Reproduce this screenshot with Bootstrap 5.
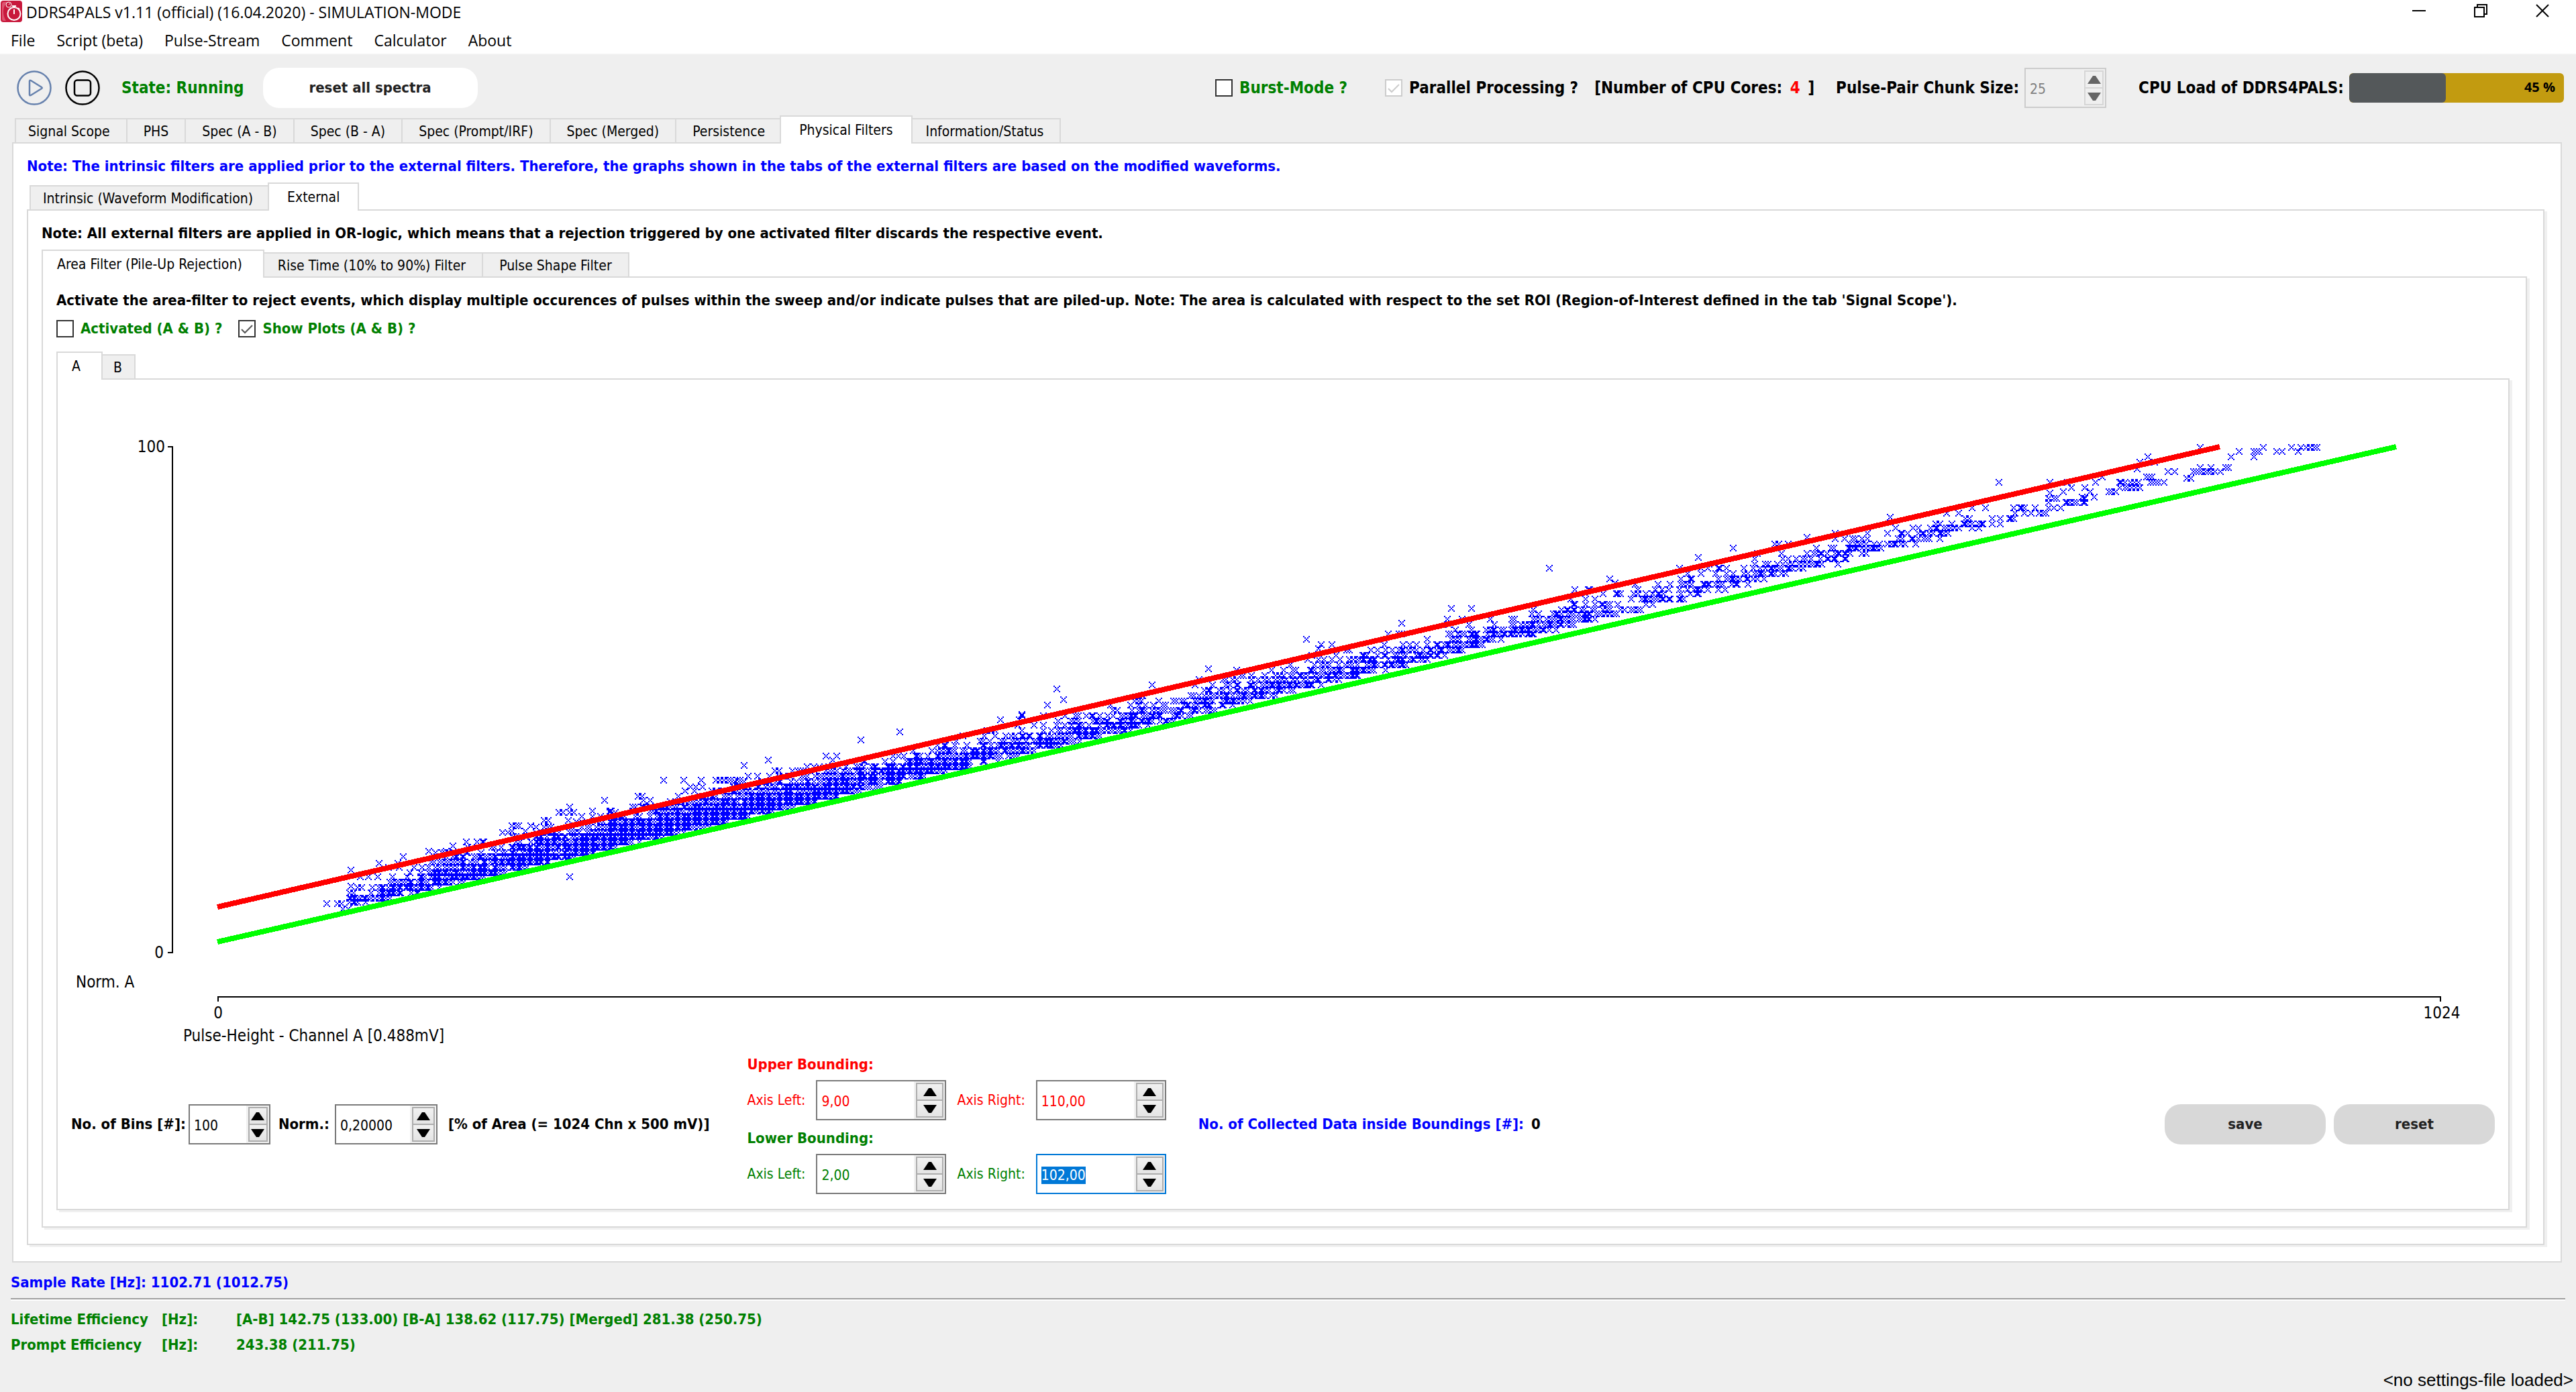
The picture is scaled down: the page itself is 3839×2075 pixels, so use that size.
<!DOCTYPE html>
<html lang="en">
<head>
<meta charset="utf-8">
<meta name="viewport" content="width=device-width, initial-scale=1">
<title>DDRS4PALS v1.11 (official) (16.04.2020) - SIMULATION-MODE</title>
<link href="https://cdn.jsdelivr.net/npm/bootstrap@5.3.0/dist/css/bootstrap.min.css" rel="stylesheet">
<style>
:root{--face:#efefef;--line:#d9d9d9;--tahoma:"DejaVu Sans Condensed","DejaVu Sans",sans-serif;--segoe:"Open Sans","Noto Sans",sans-serif}
body{background:var(--face);color:#000;font:21px/28px var(--tahoma)}
.titlebar{height:40px;font:23px/36px var(--segoe)}
.win-btn{width:92px;height:32px;padding:0;border:0;background:none;line-height:0}
.menubar{height:42px;border-bottom:2px solid #f2f2f2;font:23px/40px var(--segoe)}
.menubar a{color:#000;text-decoration:none}
.b22{font-size:22px;font-weight:700}
.b24{font-size:24px;font-weight:700}
.c-green{color:#008000}.c-blue{color:#00f}.c-red{color:#f00}
.toolrow{height:90px;padding:8px 18px 0 25px}
.round-btn{padding:0;border:0;background:none;line-height:0}
.state{margin:0 28px 0 4px}
.pill{border:0;border-radius:24px;height:60px;color:#222;font:bold 22px/28px var(--tahoma)}
.pill-white{width:320px;background:#fff}
.pill-grey{width:240px;background:#d8d8d8}
.tick{display:flex;align-items:center;gap:10px;margin:0;padding:0;min-height:0}
.tick .form-check-input{float:none;margin:0;width:26px;height:26px;border:2px solid #333;border-radius:0;background-color:#fff;box-shadow:none;flex:none}
.tick .form-check-input:checked{background-color:#fff;border-color:#333;background-size:22px 22px;background-image:url("data:image/svg+xml,%3Csvg xmlns='http://www.w3.org/2000/svg' viewBox='0 0 22 22'%3E%3Cpath d='M3 12l5 5L19 6' fill='none' stroke='%23555' stroke-width='2'/%3E%3C/svg%3E")}
.tick .form-check-input:disabled{opacity:1;border-color:#ccc;background-image:url("data:image/svg+xml,%3Csvg xmlns='http://www.w3.org/2000/svg' viewBox='0 0 22 22'%3E%3Cpath d='M3 12l5 5L19 6' fill='none' stroke='%23ccc' stroke-width='2'/%3E%3C/svg%3E")}
.tick .form-check-label{opacity:1!important}
.spin{display:flex;height:60px;border:2px solid #7a7a7a;background:#fff;flex:none}
.spin:focus-within{border-color:#0078d7}
.spin input{flex:1;min-width:0;width:0;border:0;outline:0;padding:4px 0 0 6px;background:none;color:inherit;font:21px/26px var(--tahoma)}
.spin input::selection{background:#0078d7;color:#fff}
.spin-keys{display:flex;flex-direction:column;width:46px;padding:2px 2px 2px 3px;background:#f0f0f0}
.spin-keys button{flex:1;display:flex;align-items:center;justify-content:center;padding:0;border:2px solid #adadad;background:linear-gradient(#f1f1f1,#e4e4e4)}
.spin-keys button+button{margin-top:-2px}
.spin-w122{width:122px}.spin-w122 .spin-keys{width:34px}
.spin-w153{width:153px}.spin-w153 .spin-keys{width:39px}
.spin-w194{width:194px}
.spin:has(:disabled){border-color:#ccc;background:var(--face);color:#808080}
.spin:has(:disabled) button{border-color:#d6d6d6;background:var(--face)}
.cpu{width:320px;height:44px;border-radius:6px;background:#c29b10;position:relative}
.cpu .progress-bar{background:#54585a;border-radius:6px}
.cpu span{position:absolute;right:13px;top:7px;font:bold 20px/28px var(--segoe)}
.tabs{padding-left:4px;align-items:flex-end;height:40px;border:0;flex-wrap:nowrap}
.tabs .nav-link{height:36px;padding:4px 24px 2px;border:2px solid var(--line);border-left-width:0;border-bottom:0;border-radius:0;background:var(--face);color:#000;line-height:28px;white-space:nowrap}
.tabs .nav-item:first-child .nav-link{border-left-width:2px;padding-left:18px}
.tabs .nav-link.active{position:relative;z-index:1;height:42px;margin:0 -4px -2px;padding:6px 27px 6px;border-left-width:2px;background:#fff;color:#000}
.tabs .nav-item:first-child .nav-link.active{padding-left:21px;padding-right:31px}
.tabs-short .nav-link{padding-left:20px;padding-right:18px}
.tabs-gap{margin-top:10px}
.pane{border:2px solid var(--line);background:#fff;padding:20px 24px 24px 20px}
.pane .pane{box-shadow:4px 3px 0 #f0f0f0}
.options{margin:14px 0 20px}
.plotpane{padding:0 20px 22px}
.plot{display:block;margin:0 -20px;width:calc(100% + 40px);height:auto;font:24px var(--tahoma)}
.frame{padding:0 21px 0 18px}
.bound-title{line-height:30px}
.rule{height:4px;margin:9px 0 14px;border-top:2px solid #a0a0a0;border-bottom:2px solid #fff}
.rates{display:grid;grid-template-columns:225px 111px auto;row-gap:10px;justify-content:start}
.status{font:26px/28px "Liberation Sans",Arial,sans-serif}
</style>
</head>
<body>
<header class="bg-white">
  <div class="titlebar d-flex align-items-start">
    <svg class="me-1 flex-shrink-0" width="35" height="34" viewBox="0 0 35 34"><rect x="1" y="1" width="32" height="32" rx="4" fill="#c8193c"/><path d="M3 20V6q0-3 3-3h5Q5 9 5 17t4 14H6q-3 0-3-3z" fill="#dd5570"/><g fill="none" stroke="#fff"><circle cx="21" cy="20.500" r="9.500" stroke-width="2"/><path d="M21 14v7M18 9h6M21 8v3M27 12l2 2" stroke-width="2"/><circle cx="13" cy="7" r="4" stroke-width="1"/><path d="M13 7l2-2" stroke-width="1"/></g></svg>
    <span class="flex-grow-1">DDRS4PALS v1.11 (official) (16.04.2020) - SIMULATION-MODE</span>
    <div class="d-flex pe-1">
      <button class="win-btn" aria-label="Minimize"><svg width="20" height="20"><path d="M0 10h20" stroke="#000" stroke-width="2"/></svg></button>
      <button class="win-btn" aria-label="Restore"><svg width="20" height="20" fill="none" stroke="#000" stroke-width="2"><path d="M1 5h14v14H1zM5 5V1h14v14h-4"/></svg></button>
      <button class="win-btn" aria-label="Close"><svg width="20" height="20" stroke="#000" stroke-width="2"><path d="M1 1l18 18M19 1L1 19"/></svg></button>
    </div>
  </div>
  <nav class="menubar d-flex">
    <a class="px-3" href="#">File</a><a class="px-3" href="#">Script (beta)</a><a class="px-3" href="#">Pulse-Stream</a><a class="px-3" href="#">Comment</a><a class="px-3" href="#">Calculator</a><a class="px-3" href="#">About</a>
  </nav>
</header>

<section class="toolrow d-flex align-items-center b24">
  <button class="round-btn" aria-label="Start"><svg width="52" height="52" viewBox="0 0 52 52" fill="none" stroke="#6681ad" stroke-width="2.500"><circle cx="26" cy="26" r="24.500"/><path d="M19 16v20q0 2 2 1l16-10q1.500-1 0-2L21 15q-2-1-2 1z"/></svg></button>
  <button class="round-btn ms-3 me-4" aria-label="Stop"><svg width="60" height="52" viewBox="-4 0 60 52" fill="none" stroke="#000" stroke-width="2.500"><circle cx="26" cy="26" r="24.500"/><rect x="14" y="14.500" width="24" height="23" rx="4"/></svg></button>
  <span class="c-green state">State: Running</span>
  <button class="pill pill-white">reset all spectra</button>
  <div class="form-check tick ms-auto"><input class="form-check-input" type="checkbox" id="burst"><label class="form-check-label c-green" for="burst">Burst-Mode ?</label></div>
  <div class="form-check tick ms-5 ps-2"><input class="form-check-input" type="checkbox" id="par" checked disabled><label class="form-check-label" for="par">Parallel Processing ?</label></div>
  <span class="ms-4">[Number of CPU Cores: <span class="c-red mx-1">4</span> ]</span>
  <label class="ms-4 me-2 ps-2" for="chunk">Pulse-Pair Chunk Size:</label>
  <div class="spin spin-w122 fw-normal"><input id="chunk" value="25" disabled><div class="spin-keys"></div></div>
  <span class="ms-5 me-2">CPU Load of DDRS4PALS:</span>
  <div class="progress cpu" role="progressbar" aria-label="CPU load" aria-valuenow="45" aria-valuemin="0" aria-valuemax="100"><div class="progress-bar" style="width:45%"></div><span>45 %</span></div>
</section>

<main class="frame">
  <ul class="nav tabs">
    <li class="nav-item"><a class="nav-link" href="#">Signal Scope</a></li><li class="nav-item"><a class="nav-link" href="#">PHS</a></li><li class="nav-item"><a class="nav-link" href="#">Spec (A - B)</a></li><li class="nav-item"><a class="nav-link" href="#">Spec (B - A)</a></li><li class="nav-item"><a class="nav-link" href="#">Spec (Prompt/IRF)</a></li><li class="nav-item"><a class="nav-link" href="#">Spec (Merged)</a></li><li class="nav-item"><a class="nav-link" href="#">Persistence</a></li><li class="nav-item"><a class="nav-link active" href="#">Physical Filters</a></li><li class="nav-item"><a class="nav-link" href="#">Information/Status</a></li>
  </ul>
  <div class="pane">
    <div class="b22 c-blue">Note: The intrinsic filters are applied prior to the external filters. Therefore, the graphs shown in the tabs of the external filters are based on the modified waveforms.</div>
    <ul class="nav tabs tabs-gap">
      <li class="nav-item"><a class="nav-link" href="#">Intrinsic (Waveform Modification)</a></li><li class="nav-item"><a class="nav-link active" href="#">External</a></li>
    </ul>
    <div class="pane">
      <div class="b22">Note: All external filters are applied in OR-logic, which means that a rejection triggered by one activated filter discards the respective event.</div>
      <ul class="nav tabs tabs-gap">
        <li class="nav-item"><a class="nav-link active" href="#">Area Filter (Pile-Up Rejection)</a></li><li class="nav-item"><a class="nav-link" href="#">Rise Time (10% to 90%) Filter</a></li><li class="nav-item"><a class="nav-link" href="#">Pulse Shape Filter</a></li>
      </ul>
      <div class="pane">
        <div class="b22">Activate the area-filter to reject events, which display multiple occurences of pulses within the sweep and/or indicate pulses that are piled-up. Note: The area is calculated with respect to the set ROI (Region-of-Interest defined in the tab 'Signal Scope').</div>
        <div class="d-flex gap-4 options b22 c-green">
          <div class="form-check tick"><input class="form-check-input" type="checkbox" id="act"><label class="form-check-label" for="act">Activated (A &amp; B) ?</label></div>
          <div class="form-check tick"><input class="form-check-input" type="checkbox" id="show" checked><label class="form-check-label" for="show">Show Plots (A &amp; B) ?</label></div>
        </div>
        <ul class="nav tabs tabs-short">
          <li class="nav-item"><a class="nav-link active" href="#">A</a></li><li class="nav-item"><a class="nav-link" href="#">B</a></li>
        </ul>
        <div class="pane plotpane">
          <svg class="plot" viewBox="86 566 3652 1006" role="img" aria-label="Pulse-height against normalized area, channel A">
            <path id="marks" fill="#00f" shape-rendering="crispEdges"/>
            <g fill="none" stroke-width="8" shape-rendering="crispEdges"><path d="M324 1352L3308 666" stroke="#f00"/><path d="M324 1404L3571 666" stroke="#0f0"/></g>
            <g fill="none" stroke="#000" stroke-width="2" shape-rendering="crispEdges"><path d="M250 666h7v754h-7M325 1493v-7h3312v7"/></g>
            <g><text x="246" y="674" text-anchor="end">100</text><text x="244" y="1428" text-anchor="end">0</text><text x="113" y="1472">Norm. A</text><text x="325" y="1518" text-anchor="middle">0</text><text x="3639" y="1518" text-anchor="middle">1024</text><text x="273" y="1552">Pulse-Height - Channel A [0.488mV]</text></g>
          </svg>
          <div class="d-flex align-items-center">
            <label class="b22 me-1" for="bins">No. of Bins [#]:</label>
            <div class="spin spin-w122"><input id="bins" value="100"><div class="spin-keys"></div></div>
            <label class="b22 mx-2 ps-1" for="norm">Norm.:</label>
            <div class="spin spin-w153"><input id="norm" value="0,20000"><div class="spin-keys"></div></div>
            <span class="b22 ms-3 me-5 pe-2">[% of Area (= 1024 Chn x 500 mV)]</span>
            <div>
              <div class="b22 bound-title c-red mb-2">Upper Bounding:</div>
              <div class="d-flex align-items-center c-red">
                <label for="ul">Axis Left:</label><div class="spin spin-w194 mx-3"><input id="ul" value="9,00"><div class="spin-keys"></div></div>
                <label for="ur">Axis Right:</label><div class="spin spin-w194 ms-3"><input id="ur" value="110,00"><div class="spin-keys"></div></div>
              </div>
              <div class="b22 bound-title c-green mb-2 mt-2 pt-1">Lower Bounding:</div>
              <div class="d-flex align-items-center c-green">
                <label for="ll">Axis Left:</label><div class="spin spin-w194 mx-3"><input id="ll" value="2,00"><div class="spin-keys"></div></div>
                <label for="lr">Axis Right:</label><div class="spin spin-w194 ms-3"><input id="lr" value="102,00"><div class="spin-keys"></div></div>
              </div>
            </div>
            <span class="b22 c-blue ms-5">No. of Collected Data inside Boundings [#]: <span class="text-black ms-1">0</span></span>
            <button class="pill pill-grey ms-auto me-2">save</button>
            <button class="pill pill-grey ms-1">reset</button>
          </div>
        </div>
      </div>
    </div>
  </div>
</main>

<footer class="b22 pt-3">
  <div class="px-3">
    <div class="c-blue">Sample Rate [Hz]: 1102.71 (1012.75)</div>
    <div class="rule"></div>
    <div class="rates c-green"><span>Lifetime Efficiency</span><span>[Hz]:</span><span>[A-B] 142.75 (133.00) [B-A] 138.62 (117.75) [Merged] 281.38 (250.75)</span><span>Prompt Efficiency</span><span>[Hz]:</span><span>243.38 (211.75)</span></div>
  </div>
  <div class="status text-end pt-4 pe-1">&lt;no settings-file loaded&gt;</div>
</footer>

<script src="https://cdn.jsdelivr.net/npm/bootstrap@5.3.0/dist/js/bootstrap.bundle.min.js"></script>
<script>
// Up and down keys of every spin box
document.querySelectorAll('.spin-keys').forEach(k => {
  const off = k.previousElementSibling.disabled, c = off ? '#666' : '#000';
  k.innerHTML = ['M0 12h20L12 0H8z', 'M0 0h20L12 12H8z'].map((d, i) =>
    `<button type="button" tabindex="-1" aria-label="${i ? 'Decrease' : 'Increase'}"${off ? ' disabled' : ''}><svg width="20" height="12"><path d="${d}" fill="${c}"/></svg></button>`).join('');
});
const last = document.getElementById('lr'); last.focus(); last.select();

// Event markers: simulated band plus listed outliers
let seed = 20200416;
const rnd = () => ((seed = (seed * 1664525 + 1013904223) >>> 0) / 4294967296);
const gauss = () => Math.sqrt(-2 * Math.log(1 - rnd())) * Math.cos(2 * Math.PI * rnd());
const snapX = x => 325 + Math.round((x - 325) / 3.234) * 3.234;
const snapY = y => 666 + Math.floor((y - 666) / 7.54) * 7.54;
const even = v => 2 * Math.round(v / 2);
const seen = new Set(); let d = '';
// One cross is nine 2x2 dots on the two diagonals of a 10x10 cell
const cell = (x, y) => { const k = x + ',' + y; if (!seen.has(k)) { seen.add(k); d += `M${x} ${y}h2v2h-2z`; } };
const put = (px, py) => { const x = even(px), y = even(py); for (let i = -2; i <= 2; i++) { cell(x + 2 * i, y + 2 * i); cell(x + 2 * i, y - 2 * i); } };
const band = [[520, 620, 100], [620, 760, 330], [760, 900, 560], [900, 1080, 900], [1080, 1250, 600], [1250, 1450, 400], [1450, 1700, 330], [1700, 2000, 330], [2000, 2400, 400], [2400, 2800, 250], [2800, 3000, 80], [3000, 3110, 34]];
for (const [a, b, n] of band) for (let i = 0; i < n; i++) {
  const x = a + rnd() * (b - a), off = 10 + Math.max(0, x - 1650) * 0.009;
  const s = x < 640 ? 12 : x < 1250 ? 19 : x < 2000 ? 17 : 14;
  const e = rnd() < 0.08 ? rnd() * 48 : Math.abs(gauss()) * s;
  if (e < 66) put(snapX(x), snapY(1404 - (x - 325) * 0.2274 - off - e + 4));
}
const far = [
  [400, 1000, 1.3067, '112,1035 132,1035 140,1035 145,1060 155,1060 159,890 159,960 214,855 250,855 261,830 310,805 345,805 357,780 384,763 405,763 416,763 480,692 472,692 487,692 472,715 500,715 510,692 537,668 543,668 585,603 585,627 565,627 573,627 592,627 582,668 585,920 608,650 629,650 653,578 665,627 675,627 708,603 727,558 730,578 741,578 768,488 807,488 841,488 820,515 830,515 845,515 870,488 877,488 885,488 893,488 900,488 912,488 918,488 925,422 972,398 985,445 1020,443 932,468 950,468 1097,398 1152,308 1228,267 1423,218 1465,193 1460,215 1515,152 1547,128 1534,80'],
  [1500, 800, 1.568, '34,795 94,752 131,728 116,680 338,662 470,590 450,635 699,458 734,480 727,500 922,386 890,432 1038,320 1085,320 1028,367 1267,140 1408,188 1420,205'],
  [2400, 640, 1.2544, '163,572 228,530 366,480 420,462 522,392 725,236 820,232 852,236 1003,122 988,145 1015,145 983,172 918,212 905,236 1101,78 1159,122 1174,98 1201,98 1206,98 1211,98 1201,122 1219,78 1244,98 1254,98 1272,78 1284,98 1290,78 1299,78 1307,78 1314,78 1320,78 1042,188 1053,188 1090,188 1094,188 1099,188 1104,188 1112,188 1117,188 1122,188 1130,188 1138,188 1101,168 1121,168 1149,168 1154,168 1076,213 1085,213 1001,212 1006,212 1011,212 1008,236 1013,236 1018,236 1023,236 1034,236 950,236 954,236 960,236 970,236 978,236 986,236 950,260 960,260 967,260 973,260 981,260 989,260 930,278 937,278 944,278 895,278 845,278 902,302 880,302']];
for (const [x0, y0, kx, pts] of far) for (const p of pts.split(' ')) { const [x, y] = p.split(','); put(x0 + x / kx, y0 + y / 3); }
document.getElementById('marks').setAttribute('d', d);
</script>
</body>
</html>
